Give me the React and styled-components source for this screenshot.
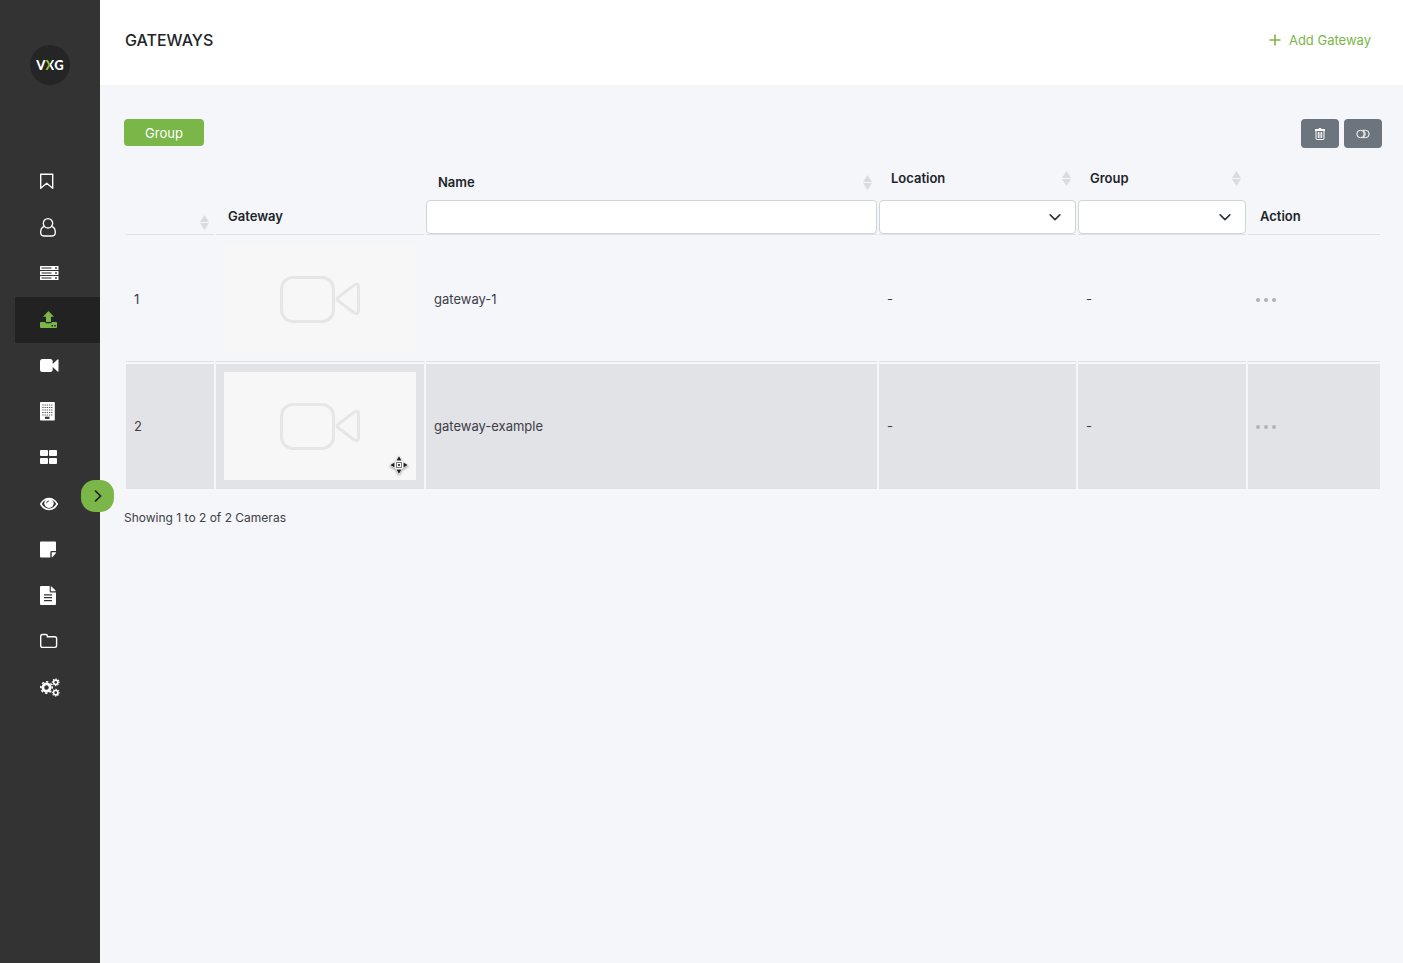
import { useState } from "react";
import styled, { createGlobalStyle, css } from "styled-components";

const GlobalStyle = createGlobalStyle`
  * {
    box-sizing: border-box;
  }
  body {
    margin: 0;
    background: #f4f6fa;
    color: #3d4046;
    font-family: Inter, "Open Sans", sans-serif;
    font-size: 13px;
    line-height: 20px;
  }
  button, input, select {
    font: inherit;
  }
`

const Page = styled.div`
  display: flex;
  min-height: 100vh;
`

const Sidebar = styled.aside`
  position: relative;
  flex: 0 0 100px;
  padding-top: 45px;
  background: #333;
`

const Logo = styled.a`
  display: flex;
  align-items: center;
  justify-content: center;
  width: 40px;
  height: 40px;
  margin: 0 auto 74px;
  border-radius: 50%;
  background: #252525;
  color: #fff;
  font-family: Lato, sans-serif;
  font-size: 13px;
  font-weight: 900;
  text-decoration: none;
  span {
    background: linear-gradient(90deg, #8cc63f 60%, #fff 60%);
    background-clip: text;
    color: transparent;
  }
`

const Nav = styled.nav`
  display: flex;
  flex-direction: column;
  margin-left: 15px;
`

const NavLink = styled.a`
  display: flex;
  align-items: center;
  height: 46px;
  padding-left: 25px;
  color: ${(props) => (props.$active ? "#7ab648" : "#fff")};
  background: ${(props) => (props.$active ? "#222" : "transparent")};
  --cut: ${(props) => (props.$active ? "#222" : "#333")};
`

const ExpandButton = styled.button`
  position: absolute;
  top: 480px;
  right: -14px;
  display: flex;
  align-items: center;
  justify-content: center;
  width: 33px;
  height: 32px;
  padding: 0;
  border: 0;
  border-radius: 14px;
  background: #7ab648;
  color: #222;
  cursor: pointer;
`

const Main = styled.main`
  flex: 1;
  min-width: 0;
`

const Header = styled.header`
  display: flex;
  align-items: center;
  justify-content: space-between;
  height: 85px;
  padding: 0 32px 5px 25px;
  background: #fff;
  h1 {
    margin: 0;
    color: #212529;
    font-size: 16px;
    font-weight: 500;
  }
`

const AddButton = styled.button`
  display: flex;
  align-items: center;
  gap: 8px;
  padding: 0;
  border: 0;
  background: none;
  color: #7ab648;
  cursor: pointer;
`

const Content = styled.section`
  padding: 34px 21px 24px 24px;
`

const Toolbar = styled.div`
  display: flex;
  align-items: flex-start;
  justify-content: space-between;
  margin-bottom: 6px;
`

const ToolGroup = styled.div`
  display: flex;
  gap: 5px;
`

const Button = styled.button`
  display: flex;
  align-items: center;
  justify-content: center;
  border: 0;
  border-radius: 4px;
  color: #fff;
  cursor: pointer;
  ${(props) => props.$icon ? css`
    width: 38px;
    height: 29px;
    padding: 0;
    background: #6c757d;
  ` : css`
    min-width: 80px;
    height: 27px;
    background: #7ab648;
  `}
`

const Table = styled.table`
  width: 100%;
  table-layout: fixed;
  border-collapse: separate;
  border-spacing: 2px;
  th {
    padding: 0;
    border-bottom: 1px solid #dee2e6;
    vertical-align: bottom;
    text-align: left;
    color: #212529;
    font-weight: 600;
  }
  td {
    padding: 8px;
    border-bottom: 1px solid #dee2e6;
  }
`

const Col = styled.col`
  width: ${(props) => props.$width};
`

const Row = styled.tr`
  background: ${(props) => (props.$hovered ? "#e2e3e7" : "transparent")};
`

const Heading = styled.div`
  display: flex;
  align-items: center;
  justify-content: space-between;
  height: ${(props) => props.$height};
  padding: 0 5px 0 12px;
`

const SortButton = styled.button`
  display: flex;
  margin-left: auto;
  padding: 0;
  border: 0;
  background: none;
  color: #dadbdd;
  cursor: pointer;
`

const control = css`
  display: block;
  width: 100%;
  height: 34px;
  padding: 4px 12px;
  border: 1px solid #ced4da;
  border-radius: 4px;
  background: #fff;
  color: #212529;
`

const FilterInput = styled.input`
  ${control}
`

const SelectWrap = styled.div`
  display: grid;
  align-items: center;
  > * {
    grid-area: 1 / 1;
  }
  svg {
    justify-self: end;
    margin-right: 14px;
    pointer-events: none;
  }
`

const FilterSelect = styled.select`
  ${control}
  appearance: none;
`

const Thumb = styled.div`
  position: relative;
  background: #f7f7f7;
  > svg {
    display: block;
    width: 100%;
  }
`

const Pointer = styled.span`
  position: absolute;
  right: 7px;
  bottom: 5px;
  display: flex;
  filter: drop-shadow(0 1px 1px rgba(0, 0, 0, 0.4));
`

const MenuButton = styled.button`
  display: flex;
  padding: 2px 0 0;
  border: 0;
  background: none;
  color: #b3b3b3;
  cursor: pointer;
`

const Summary = styled.p`
  margin: 17px 0 0;
  font-size: 12px;
`

const Icon = ({ children, size = 20 }) => (
  <svg width={size} height={size} viewBox={`0 0 ${size} ${size}`} fill="currentColor" aria-hidden="true">{children}</svg>
)

// solid ring with a short dashed stroke around it as the teeth
const Gear = ({ x, y, r, hole, tooth }) => {
  const step = (2 * Math.PI * r) / 8
  const body = r - tooth / 2 + 0.1
  return (
    <g fill="none" stroke="currentColor" transform={`rotate(-11 ${x} ${y})`}>
      <circle cx={x} cy={y} r={(body + hole) / 2} strokeWidth={body - hole} />
      <circle cx={x} cy={y} r={r} strokeWidth={tooth} strokeDasharray={`${step / 2} ${step / 2}`} />
    </g>
  )
}

const navItems = [
  {
    label: "Bookmarks",
    icon: <path d="M.7 2.200h12v14l-6-4.900-6 4.900z" fill="none" stroke="currentColor" strokeWidth="1.400" strokeLinejoin="round" />,
  },
  {
    label: "Users",
    icon: <path transform="scale(.0104)" d="M1201 784q47 14 89.500 38t89 73 79.500 115.500 55 172 22 236.500q0 154-100 263.500t-241 109.500h-854q-141 0-241-109.500t-100-263.500q0-131 22-236.500t55-172 79.500-115.500 89-73 89.500-38q-79-125-79-272 0-104 40.500-198.500t109.500-163.500 163.500-109.500 198.500-40.500 198.500 40.500 163.500 109.500 109.500 163.500 40.500 198.500q0 147-79 272zm-433-656q-159 0-271.500 112.500t-112.500 271.500 112.500 271.500 271.500 112.500 271.500-112.500 112.500-271.500-112.500-271.500-271.500-112.500zm427 1536q88 0 150.500-71.500t62.500-173.500q0-239-78.500-377t-225.500-145q-145 127-336 127t-336-127q-147 7-225.500 145t-78.500 377q0 102 62.500 173.500t150.500 71.500h854z" />,
  },
  {
    label: "Servers",
    icon: [2, 7, 12].map((y) => (
      <g key={y}>
        <rect y={y} width="18.500" height="4" rx="0.500" />
        <rect x="1.500" y={y + 1.2} width="10" height="1.600" fill="#77777c" />
        <rect x="15" y={y + 1.2} width="2" height="1.600" fill="#55555c" />
      </g>
    )),
  },
  {
    label: "Gateways",
    active: true,
    icon: (
      <>
        <path d="M8.500 1 14 6.700H11V12H6V6.700H3z" />
        <path d="M1 12H5q.3 1.300 1.500 1.300h4Q11.700 13.300 12 12h4q1 0 1 1v4q0 1-1 1H1q-1 0-1-1v-4q0-1 1-1z" />
        <path d="M11.500 15h1.500v1.400h-1.500zM14.300 15h1.500v1.400h-1.500z" fill="var(--cut)" />
      </>
    ),
  },
  {
    label: "Cameras",
    icon: <path d="M2.500 3h7.700q2.500 0 2.500 2.500V8l4.800-4.500q1-.5 1 .5v11q0 1-1 .5L12.700 11v2.500q0 2.500-2.500 2.500H2.500Q0 16 0 13.500v-8Q0 3 2.500 3z" />,
  },
  {
    label: "Buildings",
    icon: (
      <>
        <rect width="14.800" height="18.500" rx="0.800" />
        {[2.5, 5, 7.5, 10, 12.5].map((y) => (
          <path key={y} d={`M2.300 ${y + 0.5}h10.200`} stroke="#55555a" strokeWidth="1.200" strokeDasharray="1.300 0.900" />
        ))}
        <rect x="5" y="14.700" width="4.500" height="2.200" fill="var(--cut)" />
      </>
    ),
  },
  {
    label: "Layouts",
    icon: (
      <>
        <rect y="2" width="8" height="6" rx="1" />
        <rect x="9" y="2" width="8" height="6" rx="1" />
        <rect y="10" width="8" height="6" rx="1" />
        <rect x="9" y="10" width="8" height="6" rx="1" />
      </>
    ),
  },
  {
    label: "Views",
    icon: (
      <>
        <path d="M.8 10Q4 4.500 9 4.500T17.200 10Q14 15.500 9 15.500T.8 10z" fill="none" stroke="currentColor" strokeWidth="1.600" />
        <circle cx="9" cy="9.200" r="4.700" />
        <path d="M6.700 9.200q0-2.300 2.300-2.300" fill="none" stroke="var(--cut)" strokeWidth="0.900" />
      </>
    ),
  },
  {
    label: "Notes",
    icon: (
      <>
        <path d="M1 1.500h14q1 0 1 1V11h-4.500q-1.200 0-1.200 1.200v5.300H1q-1 0-1-1v-14q0-1 1-1z" />
        <path d="M11.700 12.300H16q0 1-.8 1.800l-2.500 2.600q-.5.500-1 .6z" />
      </>
    ),
  },
  {
    label: "Reports",
    icon: (
      <>
        <path d="M1 0h8.700v5.500q0 1 1 1H16V18q0 1-1 1H1q-1 0-1-1V1q0-1 1-1z" />
        <path d="M10.800.2q.7.2 1.200.7L15.100 4q.5.500.7 1.300h-5z" />
        <path d="M4 8.800h8M4 11.700h8M4 14.600h8" stroke="var(--cut)" strokeWidth="1.200" />
      </>
    ),
  },
  {
    label: "Archive",
    icon: <path d="M2.500 2.500h3.200q1.700 0 1.700 1.700v.6h7.400q1.800 0 1.800 1.800v7q0 1.800-1.800 1.800H2.500q-1.800 0-1.800-1.800V4.300q0-1.800 1.800-1.800z" fill="none" stroke="currentColor" strokeWidth="1.400" />,
  },
  {
    label: "Settings",
    icon: (
      <>
        <Gear x={6.5} y={9.5} r={5.7} hole={2.3} tooth={1.6} />
        <Gear x={15.7} y={4.3} r={3.4} hole={1.4} tooth={1} />
        <Gear x={15.7} y={14.7} r={3.4} hole={1.4} tooth={1} />
      </>
    ),
  },
]

const gateways = [
  { id: 1, name: "gateway-1", location: "-", group: "-" },
  { id: 2, name: "gateway-example", location: "-", group: "-" },
]

const Chevron = () => (
  <Icon size={14}>
    <path d="M2.200 4.800 7 9.600l4.800-4.800" fill="none" stroke="#343a40" strokeWidth="1.700" strokeLinecap="round" strokeLinejoin="round" />
  </Icon>
)

const Sort = ({ label }) => (
  <SortButton type="button" aria-label={label}>
    <svg width="9" height="15" viewBox="0 0 9 15" fill="currentColor">
      <path d="M4.500 0 9 7H0zM0 8h9l-4.500 7z" />
    </svg>
  </SortButton>
)

const Filter = ({ label }) => (
  <SelectWrap>
    <FilterSelect aria-label={label}>
      <option value=""></option>
    </FilterSelect>
    <Chevron />
  </SelectWrap>
)

const Preview = ({ hovered }) => (
  <Thumb>
    <svg viewBox="0 0 192 108" fill="none" stroke="#e6e6e6" strokeWidth="3" strokeLinejoin="round">
      <rect x="57.500" y="32.500" width="52" height="44" rx="11.500" />
      <path d="M114.500 52 129.500 40.600Q134.500 37 134.500 42.500v22.500Q134.500 70.500 129.500 67.200L114.500 56Q111.500 54 114.500 52z" />
    </svg>
    {hovered && (
      <Pointer>
        <Icon>
          <path d="M10 0 13.500 6.500 20 10l-6.500 3.500L10 20l-3.500-6.500L0 10l6.500-3.500z" fill="#fff" />
          <path d="M10 1.300 12.500 5.500h-5zM10 18.700 7.500 14.500h5zM1.300 10l4.200-2.500v5zM18.700 10l-4.200 2.500v-5z" fill="#222" />
          <rect x="7.500" y="7.500" width="5" height="5" fill="#fff" stroke="#777" />
          <rect x="9" y="9" width="2" height="2" fill="#444" />
        </Icon>
      </Pointer>
    )}
  </Thumb>
)

export default function App() {
  const [hoveredId, setHoveredId] = useState(2)

  return (
    <Page>
      <GlobalStyle />
      <Sidebar>
        <Logo href="#home">V<span>X</span>G</Logo>
        <Nav>
          {navItems.map((item) => (
            <NavLink key={item.label} href={"#" + item.label.toLowerCase()} aria-label={item.label} $active={item.active}>
              <Icon>{item.icon}</Icon>
            </NavLink>
          ))}
        </Nav>
        <ExpandButton type="button" aria-label="Expand menu">
          <Icon size={14}>
            <path d="M4 1.500 9.500 7 4 12.500" fill="none" stroke="currentColor" strokeWidth="1.700" />
          </Icon>
        </ExpandButton>
      </Sidebar>
      <Main>
        <Header>
          <h1>GATEWAYS</h1>
          <AddButton type="button">
            <Icon size={12}>
              <path d="M6 .5v11M.5 6h11" stroke="currentColor" strokeWidth="1.600" />
            </Icon>
            Add Gateway
          </AddButton>
        </Header>
        <Content>
          <Toolbar>
            <Button type="button">Group</Button>
            <ToolGroup>
              <Button type="button" $icon aria-label="Delete">
                <Icon size={12}>
                  <path d="M1 1h3.500L5 0h2l.5 1H11v2H1z" />
                  <path d="M2 3v7.500q0 1 1 1h6q1 0 1-1V3M4.300 4V10M6 4V10M7.700 4V10" fill="none" stroke="currentColor" strokeWidth="1" />
                </Icon>
              </Button>
              <Button type="button" $icon aria-label="Toggle">
                <Icon size={14}>
                  <g fill="none" stroke="currentColor">
                    <circle cx="4.500" cy="7" r="3.700" />
                    <path d="M6.500 3.300H9.500a3.700 3.700 0 0 1 0 7.400H6.500M7.500 3.900a3.700 3.700 0 0 1 0 6.200" />
                  </g>
                </Icon>
              </Button>
            </ToolGroup>
          </Toolbar>
          <Table>
            <colgroup>
              <Col $width="88px" />
              <Col $width="208px" />
              <Col $width="auto" />
              <Col $width="197px" />
              <Col $width="168px" />
              <Col $width="132px" />
            </colgroup>
            <thead>
              <tr>
                <th>
                  <Heading $height="24px"><Sort label="Sort by number" /></Heading>
                </th>
                <th>
                  <Heading $height="36px">Gateway</Heading>
                </th>
                <th>
                  <Heading $height="36px">Name<Sort label="Sort by name" /></Heading>
                  <FilterInput type="text" aria-label="Filter by name" />
                </th>
                <th>
                  <Heading $height="44px">Location<Sort label="Sort by location" /></Heading>
                  <Filter label="Filter by location" />
                </th>
                <th>
                  <Heading $height="44px">Group<Sort label="Sort by group" /></Heading>
                  <Filter label="Filter by group" />
                </th>
                <th>
                  <Heading $height="36px">Action</Heading>
                </th>
              </tr>
            </thead>
            <tbody>
              {gateways.map((g) => (
                <Row key={g.id} $hovered={g.id === hoveredId} onMouseEnter={() => setHoveredId(g.id)}>
                  <td>{g.id}</td>
                  <td><Preview hovered={g.id === hoveredId} /></td>
                  <td>{g.name}</td>
                  <td>{g.location}</td>
                  <td>{g.group}</td>
                  <td>
                    <MenuButton type="button" aria-label={"Actions for " + g.name}>
                      <svg width="20" height="4" viewBox="0 0 20 4" fill="currentColor">
                        <circle cx="2" cy="2" r="2" />
                        <circle cx="10" cy="2" r="2" />
                        <circle cx="18" cy="2" r="2" />
                      </svg>
                    </MenuButton>
                  </td>
                </Row>
              ))}
            </tbody>
          </Table>
          <Summary>Showing 1 to 2 of 2 Cameras</Summary>
        </Content>
      </Main>
    </Page>
  )
}
